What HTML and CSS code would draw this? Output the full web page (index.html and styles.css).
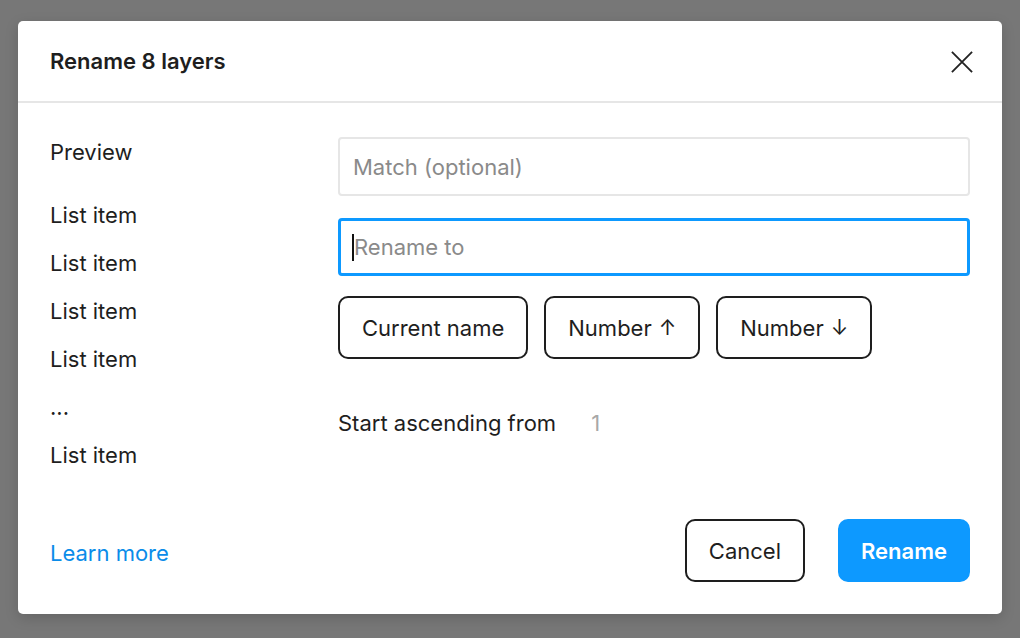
FILE: index.html
```html
<!DOCTYPE html>
<html>
<head>
<meta charset="utf-8">
<link rel="stylesheet" href="styles.css">
</head>
<body>
<div class="dialog">
  <div class="header">
    <div class="title">Rename 8 layers</div>
    <svg class="close" width="24" height="24" viewBox="0 0 24 24"><path d="M1 1L23 23M23 1L1 23" stroke="#222" stroke-width="2" fill="none"/></svg>
  </div>
  <div class="body">
    <div class="preview">
      <div class="preview-title">Preview</div>
      <div class="item">List item</div>
      <div class="item">List item</div>
      <div class="item">List item</div>
      <div class="item">List item</div>
      <div class="item">...</div>
      <div class="item">List item</div>
    </div>
    <div class="form">
      <div class="input">Match (optional)</div>
      <div class="input focused"><span class="caret"></span>Rename to</div>
      <div class="chips">
        <div class="chip">Current name</div>
        <div class="chip">Number <span class="arrow">↑</span></div>
        <div class="chip">Number <span class="arrow">↓</span></div>
      </div>
      <div class="start"><span>Start ascending from</span><span class="num">1</span></div>
    </div>
  </div>
  <div class="footer">
    <a class="learn">Learn more</a>
    <div class="actions">
      <div class="btn">Cancel</div>
      <div class="btn primary">Rename</div>
    </div>
  </div>
</div>
</body>
</html>
```
FILE: styles.css
```css
html, body { margin: 0; padding: 0; }
body {
  background: #777777;
  width: 1020px;
  height: 638px;
  box-sizing: border-box;
  padding: 21px 18px;
  font-family: Inter, "Noto Sans", sans-serif;
  color: #1e1e1e;
}
.dialog {
  background: #fff;
  width: 984px;
  height: 593px;
  border-radius: 5px;
  display: flex;
  flex-direction: column;
  box-shadow: 0 4px 14px rgba(0,0,0,0.15);
}
.header {
  height: 80px;
  border-bottom: 2px solid #e6e6e6;
  display: flex;
  align-items: center;
  justify-content: space-between;
  padding: 0 29px 0 32px;
}
.title { font-size: 22px; font-weight: 600; }
.close { width: 22px; height: 22px; margin-top: 1px; }
.body {
  flex: 1;
  display: flex;
  padding: 34px 32px 0 32px;
}
.preview { width: 288px; font-size: 22px; }
.preview-title { line-height: 30px; height: 30px; margin-bottom: 24px; }
.item { line-height: 48px; height: 48px; }
.form { flex: 1; display: flex; flex-direction: column; }
.input {
  height: 59px;
  box-sizing: border-box;
  border: 2px solid #e6e6e6;
  border-radius: 4px;
  font-size: 22px;
  color: #8a8a8a;
  display: flex;
  align-items: center;
  padding-left: 13px;
}
.input.focused {
  margin-top: 22px;
  height: 58px;
  border: 3px solid #0d99ff;
  padding-left: 11px;
}
.caret { width: 2px; height: 27px; background: #111; }
.chips { display: flex; gap: 16px; margin-top: 20px; }
.chip {
  height: 63px;
  box-sizing: border-box;
  border: 2px solid #1e1e1e;
  border-radius: 10px;
  font-size: 22px;
  display: flex;
  align-items: center;
  padding: 0 22px;
}
.arrow { margin-left: 7px; font-size: 21px; }
.start {
  margin-top: 49px;
  font-size: 22px;
  line-height: 30px;
  display: flex;
}
.num { color: #a8a8a8; margin-left: 35px; }
.footer {
  display: flex;
  align-items: center;
  justify-content: space-between;
  padding: 0 32px 32px 32px;
}
.learn { color: #0a8ce9; font-size: 22px; margin-top: 4px; }
.actions { display: flex; gap: 33px; }
.btn {
  height: 63px;
  box-sizing: border-box;
  border: 2px solid #1e1e1e;
  border-radius: 10px;
  font-size: 22px;
  display: flex;
  align-items: center;
  padding: 0 22px;
}
.btn.primary {
  background: #0d99ff;
  border-color: #0d99ff;
  color: #fff;
  font-weight: 600;
  padding: 0 21px;
}
```
